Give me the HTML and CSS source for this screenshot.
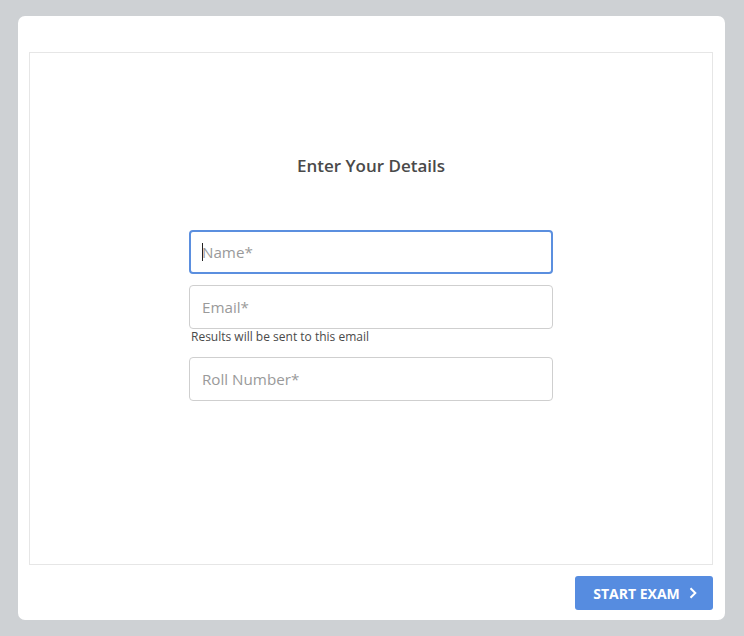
FILE: index.html
```html
<!DOCTYPE html>
<html lang="en">
<head>
<meta charset="utf-8">
<title>Enter Your Details</title>
<link rel="stylesheet" href="styles.css">
</head>
<body>
  <div class="card">
    <div class="panel">
      <h1 class="title">Enter Your Details</h1>
      <form class="form">
        <div class="field focused"><span class="caret"></span><span class="ph">Name*</span></div>
        <div class="field email"><span class="ph">Email*</span></div>
        <p class="hint">Results will be sent to this email</p>
        <div class="field"><span class="ph">Roll Number*</span></div>
      </form>
    </div>
    <div class="footer">
      <button class="start" type="button">START EXAM
        <svg class="chev" width="8" height="12" viewBox="0 0 8 12"><path d="M1.5 1.2 L6.3 6 L1.5 10.8" fill="none" stroke="#fff" stroke-width="2"/></svg>
      </button>
    </div>
  </div>
</body>
</html>
```
FILE: styles.css
```css
* { box-sizing: border-box; }
html, body { margin: 0; height: 100%; }
body {
  background: #ced1d4;
  padding: 16px 19px 16px 18px;
  font-family: "Open Sans", "Liberation Sans", sans-serif;
}
.card {
  background: #fff;
  border-radius: 7px;
  height: 604px;
  padding: 36px 12px 10px 11px;
  display: flex;
  flex-direction: column;
}
.panel {
  height: 513px;
  border: 1px solid #e6e6e6;
  padding-top: 102px;
  display: flex;
  flex-direction: column;
  align-items: center;
}
.title {
  margin: 0;
  font-size: 17px;
  line-height: 22px;
  font-weight: 600;
  color: #4a4a4a;
}
.form {
  margin-top: 53px;
  width: 364px;
  display: flex;
  flex-direction: column;
}
.field {
  height: 44px;
  border: 1px solid #cfcfcf;
  border-radius: 4px;
  display: flex;
  align-items: center;
  padding-left: 12px;
  font-size: 15.2px;
  color: #9a9a9a;
  margin-bottom: 11px;
}
.field.focused {
  border: 2px solid #5b8fdf;
  padding-left: 11px;
}
.field.email { margin-bottom: 0; }
.caret {
  width: 1px;
  height: 18px;
  background: #222;
  margin-right: -1px;
}
.hint {
  margin: 0 0 12px 2px;
  font-size: 12px;
  line-height: 16px;
  color: #4a4a4a;
}
.footer {
  margin-top: 11px;
  display: flex;
  justify-content: flex-end;
}
.start {
  width: 138px;
  height: 34px;
  border: 0;
  border-radius: 3px;
  background: #568ce0;
  color: #fff;
  font-family: "Open Sans", "Liberation Sans", sans-serif;
  font-weight: 700;
  font-size: 14px;
  display: flex;
  align-items: center;
  justify-content: center;
  gap: 9px;
  padding: 0 0 0 2px;
}
.chev { display: block; }
```
